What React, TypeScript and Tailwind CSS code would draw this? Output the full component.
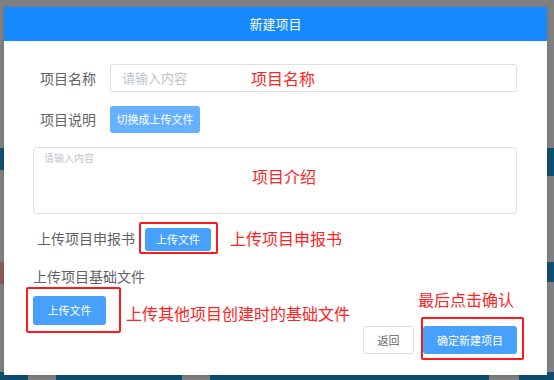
const FONT = { fontFamily: '"Noto Sans CJK SC", "Noto Sans", sans-serif' };

// dimmed page behind the modal mask
function Backdrop() {
  return (
    <div className="absolute inset-0">
      <div className="absolute left-0 top-[148px] w-[4px] h-[22px] bg-[#10506e]" />
      <div className="absolute left-0 top-[262px] w-[4px] h-[22px] bg-[#8a5a5a]" />
      <div className="absolute right-0 top-[148px] w-[8px] h-[28px] bg-[#10506e]" />
      <div className="absolute right-0 top-[262px] w-[8px] h-[20px] bg-[#10506e]" />
      <div className="absolute left-0 right-0 bottom-0 h-[8px] flex">
        <div className="w-[28px] bg-[#0e4f70]" />
        <div className="w-[28px]" />
        <div className="w-[126px] bg-[#0e4f70]" />
        <div className="w-[28px]" />
        <div className="w-[153px] bg-[#0e4f70]" />
        <div className="w-[126px] bg-[#0e4f70] ml-[0px]" />
        <div className="w-[30px]" />
        <div className="flex-1 bg-[#0e4f70]" />
      </div>
    </div>
  );
}

function Note({ children, className = '' }: { children: React.ReactNode; className?: string }) {
  return <span className={`text-[16px] leading-[20px] text-[#ff2323] whitespace-nowrap ${className}`}>{children}</span>;
}

export default function App() {
  return (
    <div style={FONT} className="relative w-[554px] h-[380px] bg-[#7f7f7f] overflow-hidden">
      <Backdrop />

      <div className="absolute left-[4px] top-[7px] w-[543px] h-[368px] bg-white flex flex-col shadow-sm">
        {/* Header */}
        <div className="h-[34px] bg-[#1689fe] flex items-center justify-center text-white text-[13px]">
          新建项目
        </div>

        {/* 项目名称 */}
        <div className="mt-[23px] flex items-center h-[28px]">
          <span className="ml-[36px] w-[70px] text-[14px] text-[#606266]">项目名称</span>
          <div className="relative w-[407px] h-[28px] border border-[#dcdfe6] rounded-[3px] flex items-center pl-[11px]">
            <span className="text-[13px] text-[#c0c4cc]">请输入内容</span>
            <Note className="absolute left-[140px] top-[3px]">项目名称</Note>
          </div>
        </div>

        {/* 项目说明 */}
        <div className="mt-[14px] flex items-center h-[27px]">
          <span className="ml-[36px] w-[70px] text-[14px] text-[#606266]">项目说明</span>
          <button className="w-[90px] h-[27px] rounded-[3px] bg-[#66b1ff] text-white text-[11px]">切换成上传文件</button>
        </div>

        {/* 项目介绍 */}
        <div className="relative mt-[14px] ml-[29px] w-[484px] h-[67px] border border-[#dcdfe6] rounded-[4px] pl-[10px] pt-[3px]">
          <div className="text-[10px] leading-[14px] text-[#c0c4cc]">请输入内容</div>
          <Note className="absolute left-[218px] top-[18px]">项目介绍</Note>
        </div>

        {/* 上传项目申报书 */}
        <div className="mt-[9px] ml-[33px] flex items-center h-[30px]">
          <span className="text-[14px] text-[#606266]">上传项目申报书</span>
          <div className="ml-[4px] border-2 border-[#ff1a1a] rounded-[2px] pt-[4px] pb-[1px] pl-[4px] pr-[5px]">
            <button className="w-[66px] h-[23px] rounded-[3px] bg-[#46a0fc] text-white text-[11px] flex items-center justify-center">上传文件</button>
          </div>
          <Note className="ml-[12px]">上传项目申报书</Note>
        </div>

        {/* 上传项目基础文件 */}
        <div className="mt-[13px] ml-[29px] text-[14px] leading-[20px] text-[#606266]">上传项目基础文件</div>

        <div className="mt-[1px] ml-[22px] flex items-start">
          <div className="border-2 border-[#ff1a1a] rounded-[2px] pt-[7px] pb-[6px] pl-[5px] pr-[13px]">
            <button className="w-[73px] h-[29px] rounded-[3px] bg-[#46a0fc] text-white text-[11px] flex items-center justify-center">上传文件</button>
          </div>
          <Note className="ml-[5px] mt-[16px]">上传其他项目创建时的基础文件</Note>

          <div className="ml-auto mr-[23px] mt-[2px] flex flex-col items-end">
            <Note className="mr-[10px]">最后点击确认</Note>
            <div className="mt-[8px] flex items-start">
              <button className="mt-[9px] w-[51px] h-[28px] rounded-[3px] border border-[#dcdfe6] bg-white text-[#606266] text-[11px]">返回</button>
              <div className="ml-[7px] border-2 border-[#ff1a1a] rounded-[2px] pt-[7px] pb-[4px] pr-[5px]">
                <button className="w-[94px] h-[28px] rounded-[3px] bg-[#46a0fc] text-white text-[11px]">确定新建项目</button>
              </div>
            </div>
          </div>
        </div>
      </div>
    </div>
  );
}
